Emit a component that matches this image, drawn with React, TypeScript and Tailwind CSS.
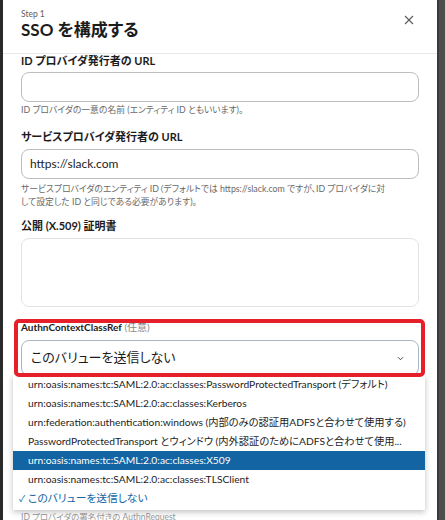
import React from "react";

const F = { fontFamily: 'Lato, "Noto Sans CJK JP", sans-serif' };

const items = [
  "urn:oasis:names:tc:SAML:2.0:ac:classes:PasswordProtectedTransport (デフォルト)",
  "urn:oasis:names:tc:SAML:2.0:ac:classes:Kerberos",
  "urn:federation:authentication:windows (内部のみの認証用ADFSと合わせて使用する)",
  "PasswordProtectedTransport とウィンドウ (内外認証のためにADFSと合わせて使用...",
  "urn:oasis:names:tc:SAML:2.0:ac:classes:X509",
  "urn:oasis:names:tc:SAML:2.0:ac:classes:TLSClient",
];

export default function App() {
  return (
    <div
      className="relative flex w-[445px] h-[520px] overflow-hidden bg-[#2e2e2e] [font-feature-settings:'palt']"
      style={F}
    >
      <div className="w-[3px] shrink-0 bg-[#2a2a2a]" />
      <div className="w-[434px] shrink-0 bg-white flex flex-col">
        <div className="h-[54px] shrink-0 border-b border-[#e8e8e8] px-[18px] pt-[9px] flex justify-between">
          <div className="flex flex-col">
            <div className="text-[8.5px] leading-[11px] text-[#616061]">Step 1</div>
            <div className="text-[17px] leading-[22px] font-bold text-[#1d1c1d] mt-[-1px]">SSO を構成する</div>
          </div>
          <div className="mt-[6px] mr-[5px]">
            <svg width="10" height="10" viewBox="0 0 10 10">
              <path d="M1 1 L9 9 M9 1 L1 9" stroke="#5a5a5a" strokeWidth="1.1" fill="none" />
            </svg>
          </div>
        </div>
        <div className="flex flex-col px-[18px]">
          <div className="text-[11px] leading-[14px] font-bold text-[#1d1c1d]">ID プロバイダ発行者の URL</div>
          <div className="mt-[4px] h-[30px] rounded-[8px] border border-[#bdbdbd]" />
          <div className="mt-[1px] text-[8.8px] leading-[14px] text-[#696969]">ID プロバイダの一意の名前 (エンティティ ID ともいいます)。</div>
          <div className="mt-[13px] text-[11px] leading-[14px] font-bold text-[#1d1c1d]">サービスプロバイダ発行者の URL</div>
          <div className="mt-[5px] h-[30px] rounded-[8px] border border-[#bdbdbd] flex items-center px-[8px] text-[12px] text-[#1d1c1d]">https://slack.com</div>
          <div className="mt-[3px] text-[8.8px] leading-[13px] text-[#696969] whitespace-nowrap">
            <div>サービスプロバイダのエンティティ ID（デフォルトでは https://slack.com ですが、ID プロバイダに対</div>
            <div>して設定した ID と同じである必要があります)。</div>
          </div>
          <div className="mt-[11px] text-[11px] leading-[14px] font-bold text-[#1d1c1d]">公開 (X.509) 証明書</div>
          <div className="mt-[5px] h-[69px] rounded-[8px] border border-[#e3e3e3]" />
          <div className="mt-[13px] text-[10px] leading-[14px] text-[#1d1c1d]">
            <span className="font-bold">AuthnContextClassRef</span>
            <span className="text-[#888]"> (任意)</span>
          </div>
          <div className="mt-[6px] h-[36px] rounded-[8px] border border-[#a9b7c4] flex items-center justify-between px-[9px] text-[13px] text-[#1d1c1d]">
            <span>このバリューを送信しない</span>
            <svg width="7" height="5" viewBox="0 0 8 6" className="mr-[5px]">
              <path d="M1 1.5 L4 4.5 L7 1.5" stroke="#444" strokeWidth="1.2" fill="none" />
            </svg>
          </div>
          <div className="mt-[134px] text-[8.5px] leading-[14px] text-[#9a9a9a]">ID プロバイダの署名付きの AuthnRequest</div>
        </div>
      </div>
      <div className="flex-1 bg-[#4e4e4e] border-l-2 border-[#3a3a3a]" />

      <div className="absolute left-[13px] top-[375px] w-[412px] bg-white shadow-[0_2px_6px_rgba(0,0,0,0.25)] pb-[2px] text-[10.25px] text-[#1d1c1d]">
        {items.map((t, i) => (
          <div
            key={i}
            className={
              i === 4
                ? "h-[19px] flex items-center pl-[15px] bg-[#1264a3] text-white whitespace-nowrap overflow-hidden"
                : "h-[19px] flex items-center pl-[15px] whitespace-nowrap overflow-hidden"
            }
          >
            {t}
          </div>
        ))}
        <div className="h-[19px] flex items-center pl-[6px] text-[#1264a3] whitespace-nowrap">
          <span className="w-[9px] text-[9px]">✓</span>
          <span className="text-[10.75px]">このバリューを送信しない</span>
        </div>
      </div>

      <div className="absolute left-[14px] top-[319px] w-[411px] h-[58px] border-[4px] border-[#e5202b] rounded-[5px]" />
    </div>
  );
}
